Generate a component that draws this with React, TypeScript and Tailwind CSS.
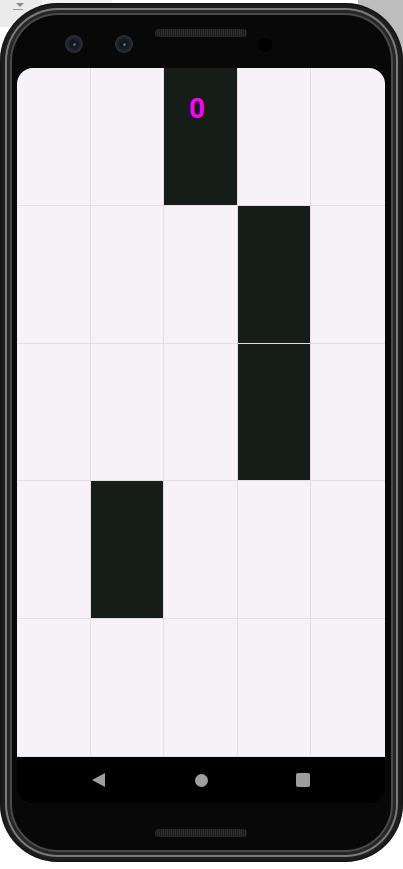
const ROWS: number[][] = [
  [0, 0, 1, 0, 0],
  [0, 0, 0, 1, 0],
  [0, 0, 0, 1, 0],
  [0, 1, 0, 0, 0],
  [0, 0, 0, 0, 0],
];

function Camera() {
  return (
    <div className="h-[18px] w-[18px] rounded-full bg-[radial-gradient(circle_at_50%_50%,#0c0f13_0%,#141a20_35%,#2b323a_70%,#15181c_100%)] flex items-center justify-center">
      <div className="h-[3px] w-[3px] rounded-full bg-[#5a6470]" />
    </div>
  );
}

function Speaker() {
  return (
    <div className="h-[8px] w-[92px] rounded-full bg-[#262626] bg-[repeating-linear-gradient(90deg,#2c2c2c_0px,#2c2c2c_1px,#1e1e1e_1px,#1e1e1e_2px)]" />
  );
}

function Board() {
  return (
    <div className="relative grid h-[689px] grid-cols-5 grid-rows-5 bg-[#f7f2f7]">
      {ROWS.map((row, r) =>
        row.map((cell, c) => (
          <div
            key={`${r}-${c}`}
            className={`border-b border-[#e3dee3] ${c < 4 ? 'border-r' : ''} ${cell ? 'bg-[#161c17]' : ''}`}
          />
        )),
      )}
      <div
        className="absolute left-[160px] top-[27px] w-[40px] text-center text-[28px] font-bold leading-none text-[#ff00ff]"
        style={{ fontFamily: 'Roboto, "Noto Sans", sans-serif' }}
      >
        0
      </div>
    </div>
  );
}

function NavBar() {
  return (
    <div className="flex h-[46px] items-center justify-center bg-black">
      <div className="flex w-[102px] justify-center pr-[2px]">
        <div className="h-0 w-0 border-y-[7px] border-r-[13px] border-y-transparent border-r-[#9e9e9e]" />
      </div>
      <div className="flex w-[102px] justify-center">
        <div className="h-[13px] w-[13px] rounded-full bg-[#9e9e9e]" />
      </div>
      <div className="flex w-[102px] justify-center">
        <div className="h-[14px] w-[14px] rounded-[2px] bg-[#9e9e9e]" />
      </div>
    </div>
  );
}

export default function App() {
  return (
    <div className="relative h-[869px] w-[403px] overflow-hidden bg-white">
      {/* window bits peeking out behind the device corners */}
      <div className="absolute left-0 top-0 h-[27px] w-[42px] bg-[#ebebeb]">
        <div className="ml-[16px] mt-[3px] h-0 w-0 border-x-[4px] border-t-[4px] border-x-transparent border-t-[#8a8a8a]" />
        <div className="ml-[13px] mt-[2px] h-[1px] w-[10px] bg-[#9a9a9a]" />
      </div>
      <div className="absolute left-[42px] top-0 h-[8px] w-[70px] bg-[#f4f4f4]" />
      <div className="absolute right-0 top-0 h-[60px] w-[45px] bg-[#bdbdbd]" />

      <div className="relative mt-[3px] h-[859px] w-[403px] rounded-[58px] bg-[#1e1e1e] p-[5px] shadow-[inset_0_0_3px_#000]">
        <div className="h-full w-full rounded-[53px] bg-[#7a7a7a] p-[2px]">
          <div className="h-full w-full rounded-[51px] bg-[#262626] p-[3px]">
            <div className="h-full w-full rounded-[48px] bg-[#4a4a4a] p-[2px]">
              <div className="flex h-full w-full flex-col rounded-[46px] bg-[#080808]">
                {/* top bezel */}
                <div className="flex h-[53px] shrink-0 items-start">
                  <div className="ml-[53px] mt-[20px]">
                    <Camera />
                  </div>
                  <div className="ml-[32px] mt-[20px]">
                    <Camera />
                  </div>
                  <div className="ml-[22px] mt-[14px]">
                    <Speaker />
                  </div>
                  <div className="ml-[11px] mt-[23px] h-[14px] w-[14px] rounded-full bg-black" />
                </div>

                {/* screen */}
                <div className="ml-[5px] w-[368px] overflow-hidden rounded-[16px] bg-black">
                  <Board />
                  <NavBar />
                </div>

                {/* bottom bezel */}
                <div className="ml-[5px] mt-[26px] flex w-[368px] justify-center">
                  <Speaker />
                </div>
              </div>
            </div>
          </div>
        </div>
      </div>
    </div>
  );
}
